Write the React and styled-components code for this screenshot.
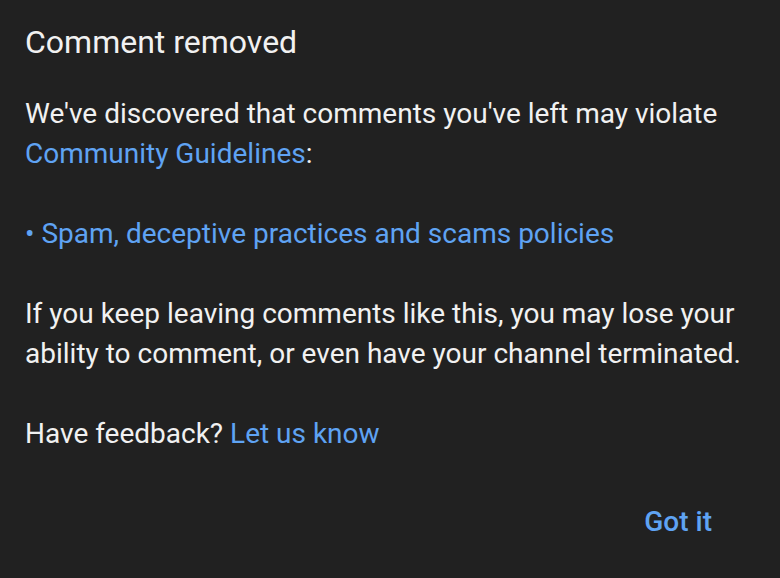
import React from 'react';
import styled, { createGlobalStyle } from 'styled-components';

const GlobalStyle = createGlobalStyle`
    html, body {
        margin: 0;
        padding: 0;
        background: #212121;
    }
    body {
        font-family: Roboto, 'Noto Sans', Arial, sans-serif;
    }
`;

const Dialog = styled.div`
    width: 780px;
    height: 578px;
    box-sizing: border-box;
    background: #212121;
    color: #f1f1f1;
    padding: 20px 25px 0 25px;
    display: flex;
    flex-direction: column;
`;

const Title = styled.h2`
    margin: 0;
    font-size: 32px;
    font-weight: 400;
    line-height: 44px;
`;

const Paragraph = styled.p`
    margin: ${(props) => props.$top || 0}px 0 0 0;
    font-size: 28px;
    line-height: 40px;
`;

const Link = styled.a`
    color: #5fa3f3;
    text-decoration: none;
`;

const Actions = styled.div`
    display: flex;
    justify-content: flex-end;
    margin-top: 48px;
    padding-right: 43px;
`;

const TextButton = styled.button`
    background: none;
    border: none;
    padding: 0;
    color: #5fa3f3;
    font-family: inherit;
    font-size: 28px;
    font-weight: 500;
    line-height: 40px;
    cursor: pointer;
`;

const App = () => {
    return (
        <>
            <GlobalStyle />
            <Dialog>
                <Title>Comment removed</Title>
                <Paragraph $top={30}>
                    We've discovered that comments you've left may violate
                    <br />
                    <Link>Community Guidelines</Link>:
                </Paragraph>
                <Paragraph $top={40}>
                    <Link>• Spam, deceptive practices and scams policies</Link>
                </Paragraph>
                <Paragraph $top={40}>
                    If you keep leaving comments like this, you may lose your
                    <br />
                    ability to comment, or even have your channel terminated.
                </Paragraph>
                <Paragraph $top={40}>
                    Have feedback? <Link>Let us know</Link>
                </Paragraph>
                <Actions>
                    <TextButton>Got it</TextButton>
                </Actions>
            </Dialog>
        </>
    );
};

export default App;
